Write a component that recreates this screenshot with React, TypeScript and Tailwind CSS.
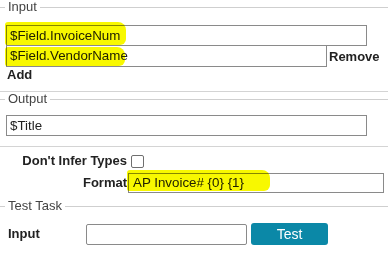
import React from 'react'

function Legend({ label, className = '' }: { label: string; className?: string }) {
  return (
    <div className={`flex items-center h-[14px] ${className}`}>
      <div className="w-[5px] h-px bg-[#cfcfcf]" />
      <span className="px-[3px] text-[13px] leading-[14px] text-[#444]">{label}</span>
      <div className="flex-1 h-px bg-[#cfcfcf]" />
    </div>
  )
}

function Marker({ className }: { className: string }) {
  return (
    <div
      className={`absolute bg-[#f8f800] mix-blend-multiply rounded-[3px_8px_6px_2px] pointer-events-none ${className}`}
    />
  )
}

export default function App() {
  return (
    <div className="relative w-[388px] h-[255px] overflow-hidden bg-white text-[#222] font-['Liberation_Sans',Arial,sans-serif]">
      <Legend label="Input" />

      <div className="mt-[11px] ml-[6px] w-[361px] h-[21px] border border-[#8a8a8a] pl-[3px] flex items-center text-[13.33px]">
        $Field.InvoiceNum
      </div>
      <div className="flex items-center">
        <div className="ml-[6px] w-[321px] h-[21px] border border-[#8a8a8a] border-t-0 pl-[3px] flex items-center text-[13.33px]">
          $Field.VendorName
        </div>
        <span className="ml-[2px] text-[13px] font-bold">Remove</span>
      </div>
      <div className="ml-[7px] mt-[1px] text-[13px] leading-[14px] font-bold">Add</div>

      <div className="mt-[9px] h-px bg-[#d4d4d4]" />
      <Legend label="Output" />

      <div className="mt-[9px] ml-[6px] w-[361px] h-[21px] border border-[#8a8a8a] pl-[3px] flex items-center text-[13.33px]">
        $Title
      </div>

      <div className="mt-[10px] h-px bg-[#d4d4d4]" />

      <div className="mt-[7px] flex items-center h-[14px]">
        <span className="w-[127px] text-right text-[13px] font-bold">Don&apos;t Infer Types</span>
        <span className="ml-[4px] w-[13px] h-[13px] border border-[#6f6f6f] rounded-[2px] bg-white" />
      </div>
      <div className="mt-[5px] flex items-center">
        <span className="w-[127px] text-right text-[13px] font-bold">Format</span>
        <div className="ml-[1px] w-[256px] h-[20px] border border-[#8a8a8a] pl-[4px] flex items-center text-[13.33px]">
          AP Invoice# {'{0}'} {'{1}'}
        </div>
      </div>

      <Legend label="Test Task" className="mt-[6px]" />

      <div className="mt-[10px] flex items-center">
        <span className="ml-[8px] w-[78px] text-[13px] font-bold">Input</span>
        <div className="w-[161px] h-[21px] border border-[#8a8a8a] rounded-[2px] bg-white" />
        <button className="ml-[4px] w-[77px] h-[22px] rounded-[3px] bg-[#0b88a7] text-white text-[14px] leading-[22px]">
          Test
        </button>
      </div>

      <Marker className="left-[5px] top-[22px] w-[121px] h-[23px]" />
      <Marker className="left-[5px] top-[47px] w-[120px] h-[19px]" />
      <Marker className="left-[127px] top-[170px] w-[143px] h-[21px]" />
    </div>
  )
}
